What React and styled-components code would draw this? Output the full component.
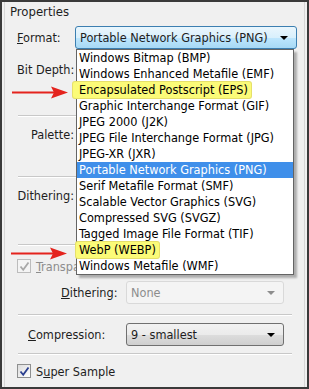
import React from "react";
import styled, { createGlobalStyle } from "styled-components";

const GlobalStyle = createGlobalStyle`
  html, body { margin: 0; padding: 0; background: #ffffff; }
  body {
    font-family: "DejaVu Sans Condensed", "DejaVu Sans", sans-serif;
    font-size: 12.6px;
  }
`;

const Frame = styled.div`
  position: relative;
  width: 309px;
  height: 389px;
  box-sizing: border-box;
  border: 2px solid #3a3a3a;
  background: #f0f0f0;
  padding: 0 2px;
  color: #1e1e1e;
`;

const Group = styled.div`
  height: 100%;
  box-sizing: border-box;
  border-left: 1px solid #d6d6d6;
  border-right: 1px solid #d6d6d6;
  padding: 0 8px 0 12px;
  display: flex;
  flex-direction: column;
`;

const Legend = styled.div`
  height: 23px;
  line-height: 20px;
  margin-left: -7px;
  font-size: 13px;
  color: #1e1e1e;
`;

const Row = styled.div`
  display: flex;
  align-items: center;
  height: ${({ $h }) => $h || 24}px;
  margin-top: ${({ $mt }) => $mt || 0}px;
  flex-shrink: 0;
`;

const Label = styled.div`
  width: ${({ $w }) => $w}px;
  box-sizing: border-box;
  padding-left: ${({ $indent }) => $indent || 0}px;
  text-align: ${({ $align }) => $align || "right"};
  flex-shrink: 0;
  white-space: nowrap;
  color: #1e1e1e;
`;

const Key = styled.span`
  text-decoration: underline;
`;

const Combo = styled.div`
  width: ${({ $w }) => $w}px;
  height: ${({ $h }) => $h || 23}px;
  box-sizing: border-box;
  display: flex;
  align-items: center;
  justify-content: space-between;
  padding: 0 8px 0 4px;
  border-radius: 3px;
  flex-shrink: 0;
  ${({ $variant }) =>
    $variant === "focus"
      ? `border: 1px solid #3c7fb1;
         background: linear-gradient(#eaf6fd 0%, #d9f0fc 50%, #bee6fd 51%, #a7d9f5 100%);
         color: #1e1e1e;`
      : $variant === "disabled"
      ? `border: 1px solid #d9d9d9;
         background: #f4f4f4;
         color: #8d8d8d;`
      : `border: 1px solid #707070;
         background: linear-gradient(#f2f2f2 0%, #ebebeb 50%, #dddddd 51%, #cfcfcf 100%);
         color: #1e1e1e;`}
`;

const Caret = styled.span`
  width: 0;
  height: 0;
  border-left: 4px solid transparent;
  border-right: 4px solid transparent;
  border-top: 4px solid ${({ $muted }) => ($muted ? "#8d8d8d" : "#000000")};
`;

const Separator = styled.div`
  height: 1px;
  background: #c8c8c8;
  border-bottom: 1px solid #ffffff;
  margin: ${({ $mt }) => $mt}px 4px 0 1px;
  flex-shrink: 0;
`;

const CheckRow = styled.label`
  display: flex;
  align-items: center;
  gap: 5px;
  height: ${({ $h }) => $h || 16}px;
  margin-top: ${({ $mt }) => $mt || 0}px;
  color: ${({ $disabled }) => ($disabled ? "#8d8d8d" : "#1e1e1e")};
  flex-shrink: 0;
`;

const Box = styled.span`
  width: 14px;
  height: 14px;
  box-sizing: border-box;
  border: 1px solid ${({ $disabled }) => ($disabled ? "#bcbcbc" : "#8e8f8f")};
  background: ${({ $disabled }) =>
    $disabled ? "#f4f4f4" : "linear-gradient(135deg, #dcdcdc, #ffffff)"};
  display: flex;
  align-items: center;
  justify-content: center;
`;

const List = styled.div`
  position: absolute;
  left: 74px;
  top: 47px;
  width: 218px;
  box-sizing: border-box;
  border: 1px solid #646464;
  background: #ffffff;
  box-shadow: 3px 3px 2px rgba(0, 0, 0, 0.28);
  color: #000000;
`;

const Item = styled.div`
  height: 16px;
  line-height: 16px;
  padding-left: 2px;
  white-space: nowrap;
  overflow: visible;
  background: ${({ $selected }) => ($selected ? "#3f8fea" : "transparent")};
  color: ${({ $selected }) => ($selected ? "#ffffff" : "#000000")};
`;

const Mark = styled.span`
  display: inline-block;
  margin-left: -${({ $pad }) => $pad}px;
  padding: 0 3px 0 ${({ $pad }) => $pad}px;
  background: #fbfb78;
  box-shadow: 0 0 0 1px #e6e06a;
  border-radius: 2px;
`;

const Arrow = styled.svg`
  position: absolute;
  left: ${({ $x }) => $x}px;
  top: ${({ $y }) => $y}px;
`;

const formats = [
  "Windows Bitmap (BMP)",
  "Windows Enhanced Metafile (EMF)",
  "Encapsulated Postscript (EPS)",
  "Graphic Interchange Format (GIF)",
  "JPEG 2000 (J2K)",
  "JPEG File Interchange Format (JPG)",
  "JPEG-XR (JXR)",
  "Portable Network Graphics (PNG)",
  "Serif Metafile Format (SMF)",
  "Scalable Vector Graphics (SVG)",
  "Compressed SVG (SVGZ)",
  "Tagged Image File Format (TIF)",
  "WebP (WEBP)",
  "Windows Metafile (WMF)",
];

const marked = { "Encapsulated Postscript (EPS)": 6, "WebP (WEBP)": 3 };

const Check = ({ color }) => (
  <svg width="11" height="11" viewBox="0 0 11 11">
    <path d="M1.5 5.5 L4.2 8.8 L9.5 1.5" fill="none" stroke={color} strokeWidth="1.8" />
  </svg>
);

const RedArrow = ({ x, y }) => (
  <Arrow $x={x} $y={y} width="58" height="13" viewBox="0 0 58 13">
    <line x1="1" y1="6.5" x2="44" y2="6.5" stroke="#e4231d" strokeWidth="2.2" />
    <path d="M40 0.5 L57 6.5 L40 12.5 L43 6.5 Z" fill="#e4231d" />
  </Arrow>
);

export default function App() {
  return (
    <>
      <GlobalStyle />
      <Frame>
        <Group>
          <Legend>Properties</Legend>
          <Row $h={25}>
            <Label $w={58} $align="left">
              <Key>F</Key>ormat:
            </Label>
            <Combo $w={222} $variant="focus">
              <span>Portable Network Graphics (PNG)</span>
              <Caret />
            </Combo>
          </Row>
          <Row $mt={7}>
            <Label $w={57}>Bit Depth:</Label>
          </Row>
          <Separator $mt={34} />
          <Row $mt={5}>
            <Label $w={57}>Palette:</Label>
          </Row>
          <Separator $mt={30} />
          <Row $mt={5}>
            <Label $w={57}>Dithering:</Label>
          </Row>
          <Separator $mt={37} />
          <CheckRow $h={22} $mt={9} $disabled>
            <Box $disabled>
              <Check color="#a8a8a8" />
            </Box>
            <span>
              <Key>T</Key>ransparency
            </span>
          </CheckRow>
          <Row $h={23} $mt={4}>
            <Label $w={109} $indent={44} $align="left">
              <Key>D</Key>ithering:
            </Label>
            <Combo $w={158} $variant="disabled">
              <span>None</span>
              <Caret $muted />
            </Combo>
          </Row>
          <Separator $mt={10} />
          <Row $h={23} $mt={7}>
            <Label $w={109} $indent={11} $align="left">
              <Key>C</Key>ompression:
            </Label>
            <Combo $w={158}>
              <span>9 - smallest</span>
              <Caret />
            </Combo>
          </Row>
          <Separator $mt={7} />
          <CheckRow $h={16} $mt={8}>
            <Box>
              <Check color="#2b3f8f" />
            </Box>
            <span>
              S<Key>u</Key>per Sample
            </span>
          </CheckRow>
        </Group>

        <List>
          {formats.map((f) => (
            <Item key={f} $selected={f === "Portable Network Graphics (PNG)"}>
              {marked[f] ? <Mark $pad={marked[f]}>{f}</Mark> : f}
            </Item>
          ))}
        </List>

        <RedArrow x={9} y={84} />
        <RedArrow x={8} y={245} />
      </Frame>
    </>
  );
}
